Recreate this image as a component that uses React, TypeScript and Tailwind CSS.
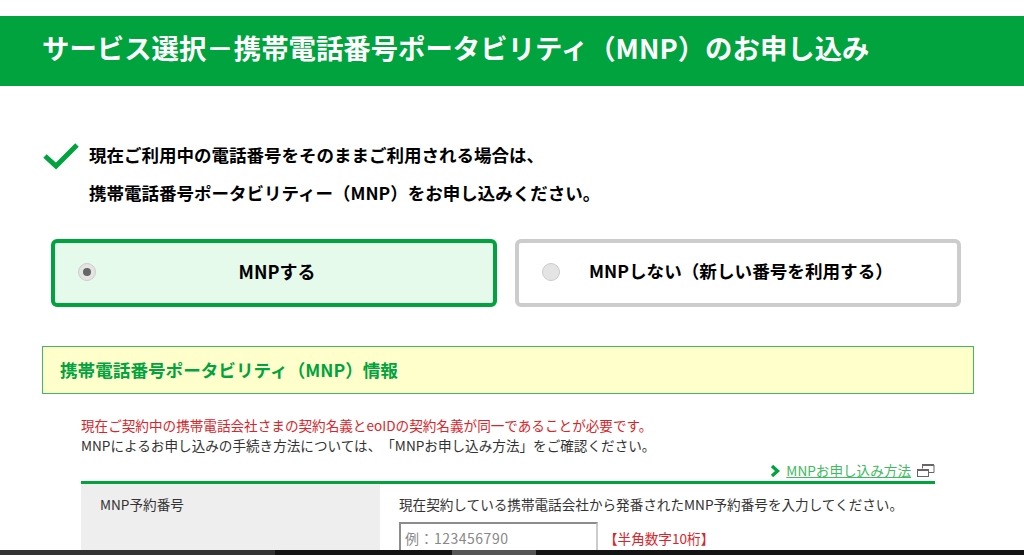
export default function App() {
  const font = { fontFamily: '"Noto Sans CJK JP", sans-serif' };

  return (
    <div className="relative h-[555px] overflow-hidden bg-white pt-4 text-black [text-spacing-trim:space-all]" style={font}>
      <h1 className="flex h-[70px] items-center bg-[#00a33e] pb-[6px] pl-[42px] text-[27.4px] font-bold text-white">
        サービス選択－携帯電話番号ポータビリティ（MNP）のお申し込み
      </h1>

      <div className="mt-[50px] flex gap-[10px] pl-[43px]">
        <svg width="36" height="28" viewBox="0 0 36 28" className="mt-[6px] shrink-0">
          <path d="M2 14 L13 24 L34 3" fill="none" stroke="#00a33e" strokeWidth="5" />
        </svg>
        <div className="text-[17.5px] leading-[38px] font-bold">
          <p>現在ご利用中の電話番号をそのままご利用される場合は、</p>
          <p>携帯電話番号ポータビリティー（MNP）をお申し込みください。</p>
        </div>
      </div>

      <div className="mt-[27px] flex gap-[18px] pl-[51px]">
        <label className="relative flex h-[68px] w-[446px] items-center justify-center rounded-[6px] border-[4px] border-[#00a33e] bg-[#e6faeb] pb-[3px] pl-[6px] text-[18px] font-bold">
          <span className="absolute top-[20px] left-[23px] flex h-[18px] w-[18px] items-center justify-center rounded-full border border-[#cccccc] bg-[#e4e4e4]">
            <span className="h-[8px] w-[8px] rounded-full bg-[#666666]" />
          </span>
          MNPする
        </label>
        <label className="relative flex h-[68px] w-[446px] items-center justify-center rounded-[6px] border-[4px] border-[#cccccc] bg-white pb-[3px] text-[17.6px] font-bold">
          <span className="absolute top-[20px] left-[23px] h-[18px] w-[18px] rounded-full border border-[#cccccc] bg-[#e4e4e4]" />
          <span className="pl-[6px]">MNPしない（新しい番号を利用する）</span>
        </label>
      </div>

      <h2 className="mt-[39px] ml-[42px] flex h-[48px] w-[932px] items-center border border-[#3fb962] bg-[#ffffcc] pl-[17px] text-[17.6px] font-bold text-[#00a33e]">
        携帯電話番号ポータビリティ（MNP）情報
      </h2>

      <div className="mt-[21px] ml-[81px] w-[854px]">
        <p className="text-[13.6px] leading-[20px] text-[#d9252a]">
          現在ご契約中の携帯電話会社さまの契約名義とeoIDの契約名義が同一であることが必要です。
        </p>
        <p className="text-[13.6px] leading-[20px] text-[#333333]">
          MNPによるお申し込みの手続き方法については、「MNPお申し込み方法」をご確認ください。
        </p>

        <div className="mt-[5px] flex h-[21px] items-center justify-end gap-[6px]">
          <svg width="10" height="14" viewBox="0 0 10 14">
            <path d="M2 2 L7.5 7 L2 12" fill="none" stroke="#00a33e" strokeWidth="3.4" />
          </svg>
          <a className="text-[13.6px] text-[#3fb962] underline">MNPお申し込み方法</a>
          <svg width="18" height="14" viewBox="0 0 18 14">
            <path d="M5.5 4.5 V1 H17 V8.5 H12" fill="none" stroke="#666666" strokeWidth="1" />
            <path d="M5 1 H17" stroke="#666666" strokeWidth="2" />
            <rect x="0.5" y="5.5" width="11" height="7" fill="white" stroke="#666666" />
            <path d="M0 6 H12" stroke="#666666" strokeWidth="2" />
          </svg>
        </div>

        <div className="flex border-t-[3px] border-[#00a33e]">
          <div className="w-[299px] bg-[#eeeeee] pt-[10px] pl-[19px] text-[13.6px] leading-[20px] text-[#333333]">
            MNP予約番号
          </div>
          <div className="flex-1 pt-[10px] pl-[19px] text-[13.6px] leading-[20px] text-[#333333]">
            <p>現在契約している携帯電話会社から発番されたMNP予約番号を入力してください。</p>
            <div className="mt-[8px] flex items-center gap-[6px]">
              <input
                readOnly
                placeholder="例：123456790"
                className="h-[32px] w-[199px] border-2 border-t-[#8c8c8c] border-r-[#cccccc] border-b-[#cccccc] border-l-[#8c8c8c] px-[4px] text-[14px] tracking-[0.5px] placeholder:text-[#888888]"
              />
              <span className="text-[#d9252a]">【半角数字10桁】</span>
            </div>
          </div>
        </div>
      </div>

      {/* dark strip along the bottom edge */}
      <div className="absolute right-0 bottom-0 left-0 flex h-[5px] bg-[#141414]">
        <div className="w-[275px] bg-[#333333]" />
        <div className="ml-[177px] w-[84px] bg-[#555555]" />
      </div>
    </div>
  );
}
